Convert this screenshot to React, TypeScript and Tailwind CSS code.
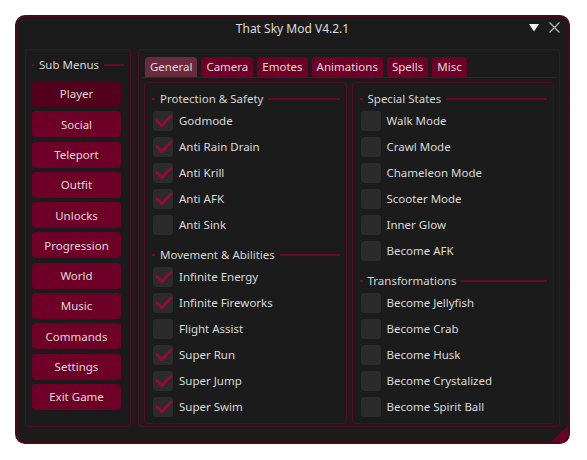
import React from "react";

const subMenus = ["Player","Social","Teleport","Outfit","Unlocks","Progression","World","Music","Commands","Settings","Exit Game"];
const tabs = ["General","Camera","Emotes","Animations","Spells","Misc"];

type Item = [string, boolean];
const protection: Item[] = [["Godmode",true],["Anti Rain Drain",true],["Anti Krill",true],["Anti AFK",true],["Anti Sink",false]];
const movement: Item[] = [["Infinite Energy",true],["Infinite Fireworks",true],["Flight Assist",false],["Super Run",true],["Super Jump",true],["Super Swim",true]];
const states: Item[] = [["Walk Mode",false],["Crawl Mode",false],["Chameleon Mode",false],["Scooter Mode",false],["Inner Glow",false],["Become AFK",false]];
const transforms: Item[] = [["Become Jellyfish",false],["Become Crab",false],["Become Husk",false],["Become Crystalized",false],["Become Spirit Ball",false]];

function Header({ label, first }: { label: string; first?: boolean }) {
  return (
    <div className={`flex items-center h-[14px] shrink-0 ${first ? "" : "mt-[7px]"} mb-[5px]`}>
      <div className="ml-[7px] w-[3px] h-[2px] bg-[#7a0a2c]" />
      <span className="ml-[5px] text-[11.5px] leading-[14px] text-[#d6d6d6] whitespace-nowrap">{label}</span>
      <div className="ml-[5px] mr-[6px] flex-1 h-[2px] bg-[#6a0926]" />
    </div>
  );
}

function Check({ label, on }: { label: string; on: boolean }) {
  return (
    <div className="flex items-center h-[20px] shrink-0 mb-[6px] pl-[8px]">
      <div className="w-[20px] h-[20px] rounded-[3px] bg-[#2b2b2b] flex items-center justify-center">
        {on && (
          <svg width="20" height="20" viewBox="0 0 20 20">
            <path d="M3.8 9.5 L8.8 14.6 L17.8 5.4" fill="none" stroke="#8e0c35" strokeWidth="3" strokeLinecap="round" strokeLinejoin="round" />
          </svg>
        )}
      </div>
      <span className="ml-[6px] text-[11.5px] leading-[14px] text-[#dadada] whitespace-nowrap">{label}</span>
    </div>
  );
}

export default function App() {
  return (
    <div className="w-[587px] h-[460px] bg-white pt-[15px] pl-[15px] font-['Noto_Sans','Open_Sans',sans-serif]">
      <div className="relative w-[555px] h-[429px] rounded-[10px] border-2 border-[#4e0719] bg-[#1b1b1b] flex flex-col overflow-hidden">
        {/* title bar */}
        <div className="relative h-[22px] flex items-center justify-center">
          <span className="text-[12px] text-[#dcdcdc] leading-[14px] mt-[1px]">That Sky Mod V4.2.1</span>
          <div className="absolute right-[8px] top-[5px] flex items-center gap-[10px]">
            <svg width="10" height="8" viewBox="0 0 10 8"><path d="M0 0 L10 0 L5 7.5 Z" fill="#f2f2f2" /></svg>
            <svg width="11" height="11" viewBox="0 0 11 11"><path d="M0.5 0.5 L10.5 10.5 M10.5 0.5 L0.5 10.5" stroke="#b5b5b5" strokeWidth="1.3" /></svg>
          </div>
        </div>

        <div className="flex gap-[7px] px-[8px] pt-[10px] h-[388px]">
          {/* left sub menus */}
          <div className="w-[106px] h-[378px] rounded-[4px] border border-[#560a22] pt-[8px]">
            <div className="flex items-center h-[14px]">
              <div className="ml-[6px] w-[2px] h-[2px] bg-[#7a0a2c]" />
              <span className="ml-[5px] text-[11.5px] leading-[14px] text-[#d6d6d6] whitespace-nowrap">Sub Menus</span>
              <div className="ml-[5px] mr-[6px] flex-1 h-[2px] bg-[#6a0926]" />
            </div>
            <div className="flex flex-col gap-[4.3px] pl-[6px] mt-[9px]">
              {subMenus.map((m, i) => (
                <div
                  key={m}
                  className={`w-[89px] h-[26px] rounded-[4px] flex items-center justify-center text-[11.5px] text-[#e2d6da] ${i === 0 ? "bg-[#52001c]" : "bg-[#6e0027]"}`}
                >
                  {m}
                </div>
              ))}
            </div>
          </div>

          {/* right panel */}
          <div className="flex-1 h-[378px] rounded-[4px] border border-[#560a22] pt-[7px] flex flex-col">
            <div className="mx-[3px] border-b border-[#6a0926] h-[21px] flex gap-[4px] pl-[3px]">
              {tabs.map((t, i) => (
                <div
                  key={t}
                  className={`h-[20px] px-[5px] rounded-t-[4px] flex items-center text-[11.5px] text-[#e2d8dc] ${i === 0 ? "bg-[#6a2a3e]" : "bg-[#6e0027]"}`}
                >
                  {t}
                </div>
              ))}
            </div>
            <div className="flex gap-[5px] px-[5px] pt-[4px] pb-[6px] flex-1">
              <div className="flex-1 flex flex-col rounded-[4px] border border-[#560a22] pt-[9px]">
                <Header label="Protection & Safety" first />
                {protection.map(([l, o]) => <Check key={l} label={l} on={o} />)}
                <Header label="Movement & Abilities" />
                {movement.map(([l, o]) => <Check key={l} label={l} on={o} />)}
              </div>
              <div className="flex-1 flex flex-col rounded-[4px] border border-[#560a22] pt-[9px]">
                <Header label="Special States" first />
                {states.map(([l, o]) => <Check key={l} label={l} on={o} />)}
                <Header label="Transformations" />
                {transforms.map(([l, o]) => <Check key={l} label={l} on={o} />)}
              </div>
            </div>
          </div>
        </div>

        {/* resize grip */}
        <svg className="absolute right-0 bottom-0" width="18" height="16" viewBox="0 0 18 16">
          <path d="M18 0 L18 16 L1 16 Z" fill="#6e0027" />
        </svg>
      </div>
    </div>
  );
}
